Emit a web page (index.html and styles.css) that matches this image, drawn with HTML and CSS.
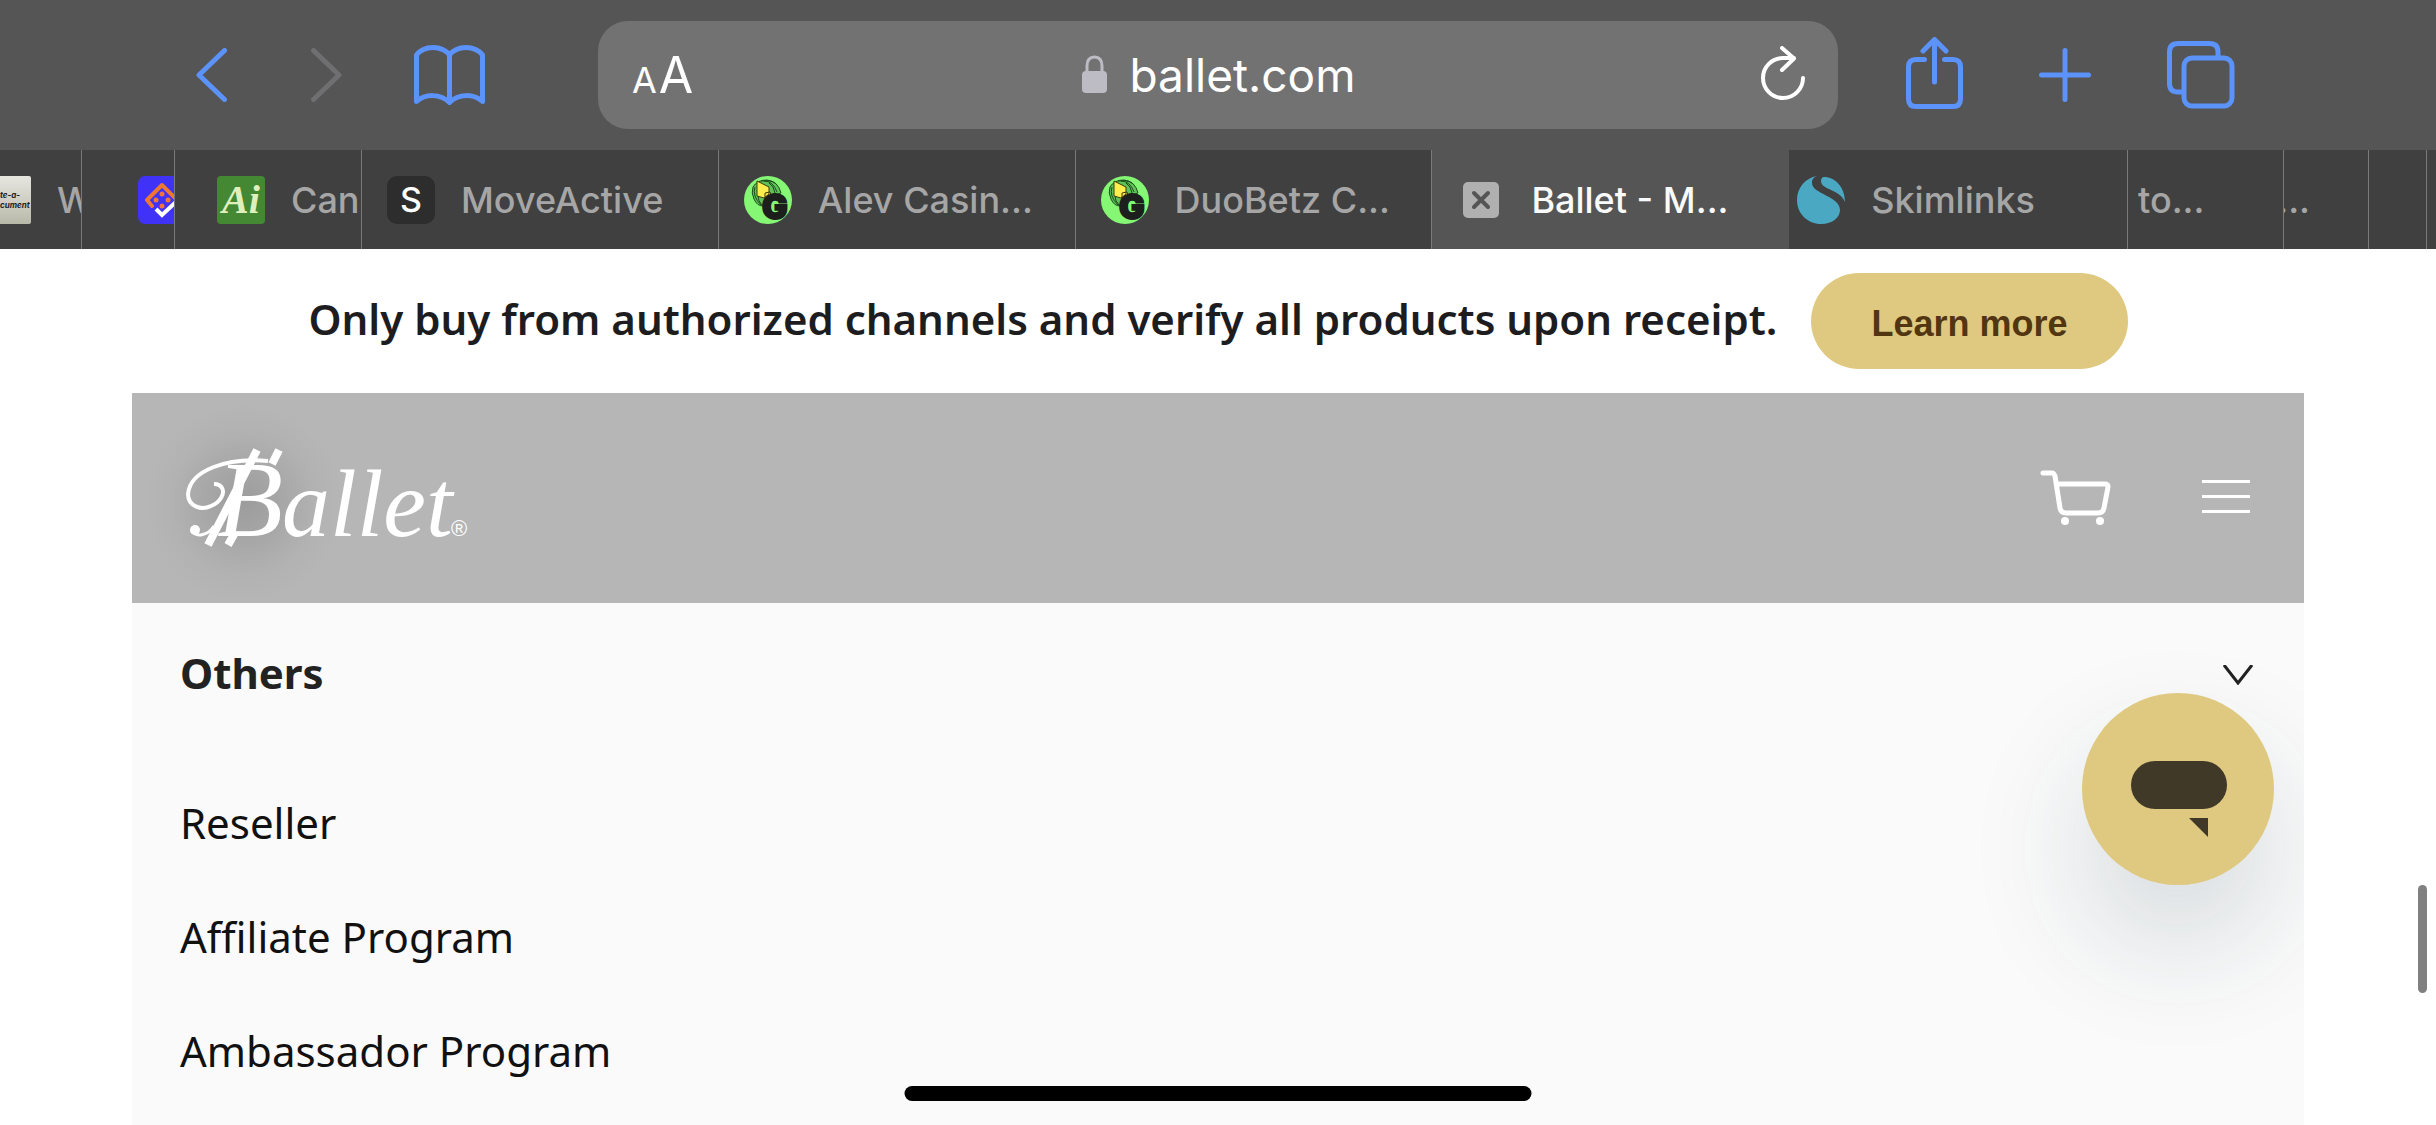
FILE: index.html
```
<!DOCTYPE html>
<html lang="en">
<head>
    <meta charset="UTF-8">
    <meta name="viewport" content="width=device-width, initial-scale=1.0">
    <title>Ballet - Menu</title>
    <link rel="stylesheet" href="styles.css">
</head>
<body>
    <!-- Shared favicon -->
    <svg class="defs" aria-hidden="true">
        <symbol id="gorilla" viewBox="0 0 48 48">
            <circle cx="24" cy="24" r="24" fill="#85f774"/>
            <path d="M9 11q4-7 14-7 11 1 14 13l-14 5-4 8q-6 0-9-7-3-6-1-12z" fill="#5fc257" stroke="#1c4a1c" stroke-width="1"/>
            <path d="M11 11q-3 9 6 18M14 20q0 5 4 9M20 5q9 0 13 11M25 7q5 3 6 10M17 5q10-1 14 2" fill="none" stroke="#1c4a1c" stroke-width="1"/>
            <path d="M13 5l12 6 0 7-5 4-7-2zM21 17l5-1 1 3-6 4z" fill="#ffee4d" stroke="#3d3a12" stroke-width="1"/>
            <text class="gorilla-text" x="18" y="43">G</text>
        </symbol>
    </svg>

    <header class="browser">
        <div class="toolbar">
            <nav class="toolbar-nav" aria-label="History">
                <button class="icon-button" aria-label="Back">
                    <svg width="31" height="54" viewBox="0 0 31 54"><path d="M28.500 2.500L3 27l25.500 24.500" stroke="#5b93fb"/></svg>
                </button>
                <button class="icon-button forward" aria-label="Forward" disabled>
                    <svg width="31" height="54" viewBox="0 0 31 54"><path d="M2.500 2.500L28 27 2.500 51.500" stroke="#6f6f71"/></svg>
                </button>
                <button class="icon-button book" aria-label="Bookmarks">
                    <svg width="71" height="60" viewBox="0 0 71 60"><path d="M35.500 10v47M35.500 10C28 0 10 0 2.500 10v46.500c9-8 24-8 33 1 9-9 24-9 33-1V10C61 0 43 0 35.500 10z" stroke="#5b93fb"/></svg>
                </button>
            </nav>

            <div class="address-bar">
                <button class="text-size" aria-label="Text size"><span class="small-a">A</span><span class="large-a">A</span></button>
                <div class="address">
                    <svg width="25" height="40" viewBox="0 0 25 40"><path d="M5 18v-7q0-9 7.500-9T20 11v7" fill="none" stroke="#bdbbc3" stroke-width="3"/><rect y="16" width="25" height="22" rx="4" fill="#bdbbc3"/></svg>
                    <span>ballet.com</span>
                </div>
                <button class="icon-button reload" aria-label="Reload">
                    <svg width="46" height="58" viewBox="0 0 46 58"><path d="M43 32a20 20 0 1 1-20-20h11M22 2l12 10.500L22 24" stroke="#fff"/></svg>
                </button>
            </div>

            <div class="toolbar-actions">
                <button class="icon-button" aria-label="Share">
                    <svg width="57" height="76" viewBox="0 0 57 76"><path d="M18.500 22.500H10q-7.500 0-7.500 7.500v32q0 7.500 7.500 7.500h37q7.500 0 7.500-7.500V30q0-7.500-7.500-7.500h-8.500M28.500 45V3M17 14L28.500 2.500 40 14" stroke="#5b93fb"/></svg>
                </button>
                <button class="icon-button" aria-label="New tab">
                    <svg width="52" height="54" viewBox="0 0 52 54"><path d="M26 2.500v49M2.500 27h47" stroke="#5b93fb"/></svg>
                </button>
                <button class="icon-button" aria-label="Show tabs">
                    <svg width="68" height="68" viewBox="0 0 68 68"><path d="M16 51h-5q-8.500 0-8.500-8.500V11q0-8.500 8.500-8.500h31.500Q51 2.500 51 11v5" stroke="#5b93fb"/><rect x="17" y="17" width="48" height="48" rx="8" stroke="#5b93fb"/></svg>
                </button>
            </div>
        </div>

        <nav class="tabs" aria-label="Open tabs">
            <a href="#" class="tab tab-first">
                <svg width="31" height="48" viewBox="0 0 31 48">
                    <defs><linearGradient id="paper" x2="0" y2="1"><stop stop-color="#e6e6e0"/><stop offset="1" stop-color="#b9b9aa"/></linearGradient></defs>
                    <rect x="-10" width="41" height="48" rx="2" fill="url(#paper)"/>
                    <text class="paper-text" x="0" y="22">te-a-</text>
                    <text class="paper-text" x="0" y="32">cument</text>
                </svg>
                <span>W</span>
            </a>
            <a href="#" class="tab tab-second" aria-label="Tasks">
                <svg width="48" height="48" viewBox="0 0 48 48">
                    <rect width="48" height="48" rx="7" fill="#4032f6"/>
                    <path d="M14 30L9 24 24 9l15 15" fill="none" stroke="#ee7733" stroke-width="4" stroke-linejoin="round" stroke-linecap="round"/>
                    <path d="M18 33l6 6 15-14" fill="none" stroke="#fff" stroke-width="4"/>
                    <g fill="#ee7733"><circle cx="24" cy="18" r="2.500"/><circle cx="18" cy="24" r="2.500"/><circle cx="30" cy="24" r="2.500"/><circle cx="24" cy="30" r="2.500"/></g>
                </svg>
            </a>
            <a href="#" class="tab tab-third">
                <span class="favicon favicon-ai">Ai</span>
                <span>Can</span>
            </a>
            <a href="#" class="tab">
                <span class="favicon favicon-s">S</span>
                <span>MoveActive</span>
            </a>
            <a href="#" class="tab">
                <svg width="48" height="48"><use href="#gorilla"/></svg>
                <span>Alev Casin...</span>
            </a>
            <a href="#" class="tab">
                <svg width="48" height="48"><use href="#gorilla"/></svg>
                <span>DuoBetz C...</span>
            </a>
            <div class="tab tab-active">
                <button class="close-tab" aria-label="Close tab">
                    <svg width="36" height="36" viewBox="0 0 36 36"><rect width="36" height="36" rx="5" fill="#b0b0b0"/><path d="M11 11l14 14M25 11L11 25" stroke="#555" stroke-width="4" stroke-linecap="round"/></svg>
                </button>
                <span>Ballet - M...</span>
            </div>
            <a href="#" class="tab tab-skim">
                <svg width="48" height="48" viewBox="0 0 48 48" fill="#4aa8c3"><path d="M20 0C8 2 0 12 0 24c0 14 11 24 24 24 12 0 19-7 19-14 0-14-28-16-28-27 0-4 2-6 5-7z"/><path d="M27 1c11 0 21 10 21 25C43 13 24 14 24 5c0-2 1-4 3-4z"/></svg>
                <span>Skimlinks</span>
            </a>
            <a href="#" class="tab tab-to"><span>to...</span></a>
            <a href="#" class="tab tab-peek"><span>...</span></a>
            <a href="#" class="tab tab-sliver" aria-label="Tab"></a>
            <a href="#" class="tab tab-edge" aria-label="Tab"></a>
        </nav>
    </header>

    <main class="page">
        <section class="notice">
            <p>Only buy from authorized channels and verify all products upon receipt.</p>
            <a href="#" class="learn-more">Learn more</a>
        </section>

        <header class="site-header">
            <a href="#" class="logo" aria-label="Ballet">
                <svg width="286" height="100" viewBox="0 0 286 100">
                    <!-- Flourish and coin bars round the initial -->
                    <g fill="none" stroke="#fff">
                        <path d="M82 13C42 9 4 22 2 46c0 12 13 17 23 12 10-4 14-13 11-18-2-4-5-4-8-4" stroke-width="4"/>
                        <path d="M6 82c3 8 16 6 22-4" stroke-width="3"/>
                        <path d="M71 2L22 97M93 2l-7 14M50 83l-8 14" stroke-width="8"/>
                    </g>
                    <circle cx="9" cy="82" r="5" fill="#fff"/>
                    <text class="logo-initial" x="31" y="88">B</text>
                    <text class="logo-text" x="96" y="88">allet</text>
                    <text class="logo-mark" x="265" y="88">®</text>
                </svg>
            </a>
            <div class="header-actions">
                <a href="#" aria-label="Cart">
                    <svg width="71" height="56" viewBox="0 0 71 56"><path d="M3 3h9q2 0 3 3l5 32q1 5 6 5h32q5 0 6-5l4-21q0-3-3-3H17" fill="none" stroke="#fff" stroke-width="5" stroke-linecap="round" stroke-linejoin="round"/><circle cx="25" cy="51" r="4" fill="#fff"/><circle cx="60" cy="51" r="4" fill="#fff"/></svg>
                </a>
                <button class="menu-button" aria-label="Menu">
                    <svg width="48" height="36" viewBox="0 0 48 36"><path d="M0 1.500h48M0 16.500h48M0 31.500h48" stroke="#fff" stroke-width="3"/></svg>
                </button>
            </div>
        </header>

        <div class="menu">
            <button class="menu-title">
                <span>Others</span>
                <svg width="30" height="20" viewBox="0 0 30 20"><path d="M1 0l14 18L29 0" fill="none" stroke="#222" stroke-width="3"/></svg>
            </button>
            <ul class="menu-list">
                <li><a href="#">Reseller</a></li>
                <li><a href="#">Affiliate Program</a></li>
                <li><a href="#">Ambassador Program</a></li>
            </ul>
            <button class="chat-button" aria-label="Open chat">
                <svg width="96" height="78" viewBox="0 0 96 78" fill="#413927"><rect width="96" height="48" rx="24"/><path d="M58 57h19v19z"/></svg>
            </button>
        </div>
    </main>

    <div class="scroll-thumb"></div>
    <div class="home-indicator"></div>
</body>
</html>
```
FILE: styles.css
```
:root {
    --chrome: #555555;
    --tab: #404040;
    --gold: #dfc980;
    --side: 132px;
}

* {
    box-sizing: border-box;
}

body {
    margin: 0;
    height: 100vh;
    display: flex;
    flex-direction: column;
    overflow: hidden;
    background: #fff;
    font-family: "Noto Sans", sans-serif;
}

a {
    color: inherit;
    text-decoration: none;
}

button {
    padding: 0;
    border: 0;
    background: none;
    color: inherit;
    font: inherit;
}

svg {
    display: block;
    flex-shrink: 0;
}

.defs {
    position: absolute;
    width: 0;
    height: 0;
}

/* Browser chrome */
.browser {
    flex-shrink: 0;
    background: var(--chrome);
    font-family: Inter, sans-serif;
}

.toolbar {
    display: flex;
    align-items: center;
    height: 150px;
    padding: 0 201px 0 196px;
}

.icon-button svg {
    fill: none;
    stroke-width: 5;
    stroke-linecap: round;
    stroke-linejoin: round;
}

.toolbar-nav {
    display: flex;
    align-items: center;
    margin-right: 113px;
}

.forward {
    margin-left: 84px;
}

.book {
    margin-left: 72px;
}

.address-bar {
    flex: 1;
    display: grid;
    grid-template-columns: 1fr auto 1fr;
    align-items: center;
    height: 108px;
    padding: 0 32px 0 34px;
    border-radius: 30px;
    background: #727272;
    color: #fff;
}

.text-size {
    justify-self: start;
    display: flex;
    align-items: baseline;
    gap: 2px;
}

.small-a {
    font-size: 36px;
}

.large-a {
    font-size: 50px;
}

.address {
    display: flex;
    align-items: center;
    gap: 22px;
    font-size: 46px;
}

.reload {
    justify-self: end;
}

.icon-button.reload svg {
    stroke-width: 4;
}

.toolbar-actions {
    display: flex;
    align-items: center;
    gap: 76px;
    margin-left: 68px;
}

.tabs {
    display: flex;
    height: 99px;
    background: var(--tab);
    color: #a6a6a6;
    font-size: 36px;
    font-weight: 500;
}

.tab {
    flex: 1 1 357px;
    min-width: 0;
    display: flex;
    align-items: center;
    gap: 26px;
    padding-left: 25px;
    overflow: hidden;
    white-space: nowrap;
    border-right: 1px solid #7a7a7a;
}

.tab-first {
    flex: 0 0 82px;
    padding-left: 0;
}

.tab-second {
    flex: 0 0 93px;
    padding-left: 56px;
}

.tab-third {
    flex: 0 0 187px;
    padding-left: 42px;
}

.tab-active {
    background: var(--chrome);
    color: #fafafa;
    border-right: 0;
}

.tab-skim {
    flex-basis: 339px;
    padding-left: 8px;
}

.tab-to {
    flex: 0 0 156px;
    padding-left: 10px;
}

.tab-peek {
    flex: 0 0 85px;
    justify-content: flex-end;
    padding: 0 58px 0 0;
}

.tab-sliver {
    flex: 0 0 58px;
    padding: 0;
}

.tab-edge {
    flex: 0 0 9px;
    padding: 0;
    border-right: 0;
}

.favicon {
    flex-shrink: 0;
    width: 48px;
    height: 48px;
    line-height: 48px;
    text-align: center;
}

.favicon-ai {
    border-radius: 4px;
    background: #448833;
    color: #dff0bd;
    font-family: "Liberation Serif", serif;
    font-size: 40px;
    font-style: italic;
    font-weight: 700;
}

.favicon-s {
    border-radius: 10px;
    background: #2d2d2d;
    color: #fff;
    font-size: 34px;
}

.gorilla-text {
    fill: #1c1f1c;
    stroke: #1c1f1c;
    stroke-width: 2px;
    font-size: 34px;
    font-weight: 900;
}

.paper-text {
    fill: #222;
    font-size: 8px;
    font-style: italic;
    font-weight: 700;
}

.close-tab {
    padding: 0 6px;
}

/* Site */
.page {
    flex: 1;
    min-height: 0;
    display: flex;
    flex-direction: column;
    padding: 0 var(--side);
}

.notice {
    flex-shrink: 0;
    display: flex;
    align-items: center;
    justify-content: center;
    gap: 34px;
    height: 144px;
    color: #1d1d1f;
    font-size: 42px;
    font-weight: 600;
}

.notice p {
    margin: 0;
    padding-bottom: 6px;
}

.learn-more {
    padding: 6px 60px 0;
    border-radius: 48px;
    background: var(--gold);
    color: #523611;
    font-family: "Liberation Sans", sans-serif;
    font-size: 36px;
    font-weight: 700;
    line-height: 90px;
}

.site-header {
    flex-shrink: 0;
    display: flex;
    align-items: center;
    justify-content: space-between;
    height: 210px;
    padding: 0 54px;
    background: radial-gradient(circle at 112px 110px, #9c9c9c 0, #a8a8a8 42px, #b2b2b2 72px, #b6b6b6 100px);
}

.logo text {
    fill: #fff;
    font-family: "Liberation Serif", serif;
    font-style: italic;
}

.logo .logo-initial {
    font-size: 108px;
}

.logo .logo-text {
    font-size: 96px;
}

.logo .logo-mark {
    font-family: "Liberation Sans", sans-serif;
    font-size: 22px;
    font-style: normal;
}

.header-actions {
    display: flex;
    align-items: center;
    gap: 91px;
}

.menu {
    flex: 1;
    min-height: 0;
    position: relative;
    padding: 0 48px;
    overflow: hidden;
    background: #fafafa;
    color: #111;
    font-size: 42px;
}

.menu-title {
    display: flex;
    align-items: center;
    justify-content: space-between;
    width: 100%;
    height: 144px;
    padding-right: 3px;
    color: #222;
    font-weight: 700;
}

.menu-title span {
    padding-bottom: 6px;
}

.menu-list {
    margin: 0;
    padding: 19px 0;
    list-style: none;
}

.menu-list li {
    line-height: 114px;
}

/* Overlays */
.chat-button {
    position: absolute;
    right: 30px;
    bottom: 240px;
    width: 192px;
    height: 192px;
    padding: 22px 0 0 49px;
    border-radius: 50%;
    background: var(--gold);
    box-shadow: 0 60px 120px rgba(23, 56, 72, 0.16);
}

.scroll-thumb {
    position: absolute;
    right: 9px;
    bottom: 132px;
    width: 9px;
    height: 108px;
    border-radius: 5px;
    background: #808080;
}

.home-indicator {
    position: absolute;
    left: 50%;
    bottom: 24px;
    width: 627px;
    height: 15px;
    border-radius: 8px;
    background: #000;
    transform: translateX(-50%);
}
```
